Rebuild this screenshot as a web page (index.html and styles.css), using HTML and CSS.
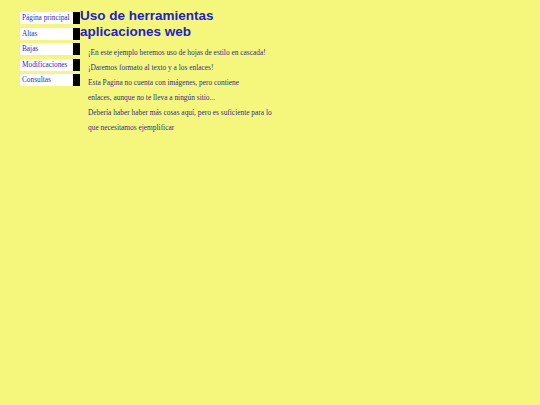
FILE: index.html
```html
<!DOCTYPE html>
<html lang="es">
<head>
<meta charset="utf-8">
<title>Uso de herramientas aplicaciones web</title>
<link rel="stylesheet" href="styles.css">
</head>
<body>
<div class="page">
  <ul class="menu">
    <li><a href="#">Página principal</a></li>
    <li><a href="#">Altas</a></li>
    <li><a href="#">Bajas</a></li>
    <li><a href="#">Modificaciones</a></li>
    <li><a href="#">Consultas</a></li>
  </ul>
  <div class="content">
    <h1 class="title">Uso de herramientas<br>aplicaciones web</h1>
    <div class="text">
      <p>¡En este ejemplo beremos uso de hojas de estilo en cascada!</p>
      <p>¡Daremos formato al texto y a los enlaces!</p>
      <p>Esta Pagina no cuenta con imágenes, pero contiene<br>enlaces, aunque no te lleva a ningún sitio...</p>
      <p>Debería haber haber más cosas aquí, pero es suficiente para lo<br>que necesitamos ejemplificar</p>
    </div>
  </div>
</div>
</body>
</html>
```
FILE: styles.css
```css
html, body {
  margin: 0;
  padding: 0;
  background: #f5f77d;
}
.page {
  display: flex;
  align-items: flex-start;
  padding: 12px 0 0 20px;
}
.menu {
  list-style: none;
  margin: 0;
  padding: 0;
  width: 60px;
}
.menu li {
  margin: 0 0 3.5px 0;
}
.menu a {
  display: block;
  height: 12px;
  line-height: 12px;
  padding-left: 2px;
  background: #ffffff;
  border-right: 7px solid #000000;
  color: #2a2ad0;
  text-decoration: none;
  font-family: "Liberation Serif", serif;
  font-size: 7.3px;
  white-space: nowrap;
  overflow: hidden;
}
.content {
  margin-top: -4px;
}
.title {
  margin: 0;
  font-family: "Liberation Sans", Arial, sans-serif;
  font-weight: bold;
  font-size: 13.5px;
  line-height: 15.5px;
  color: #2222cc;
}
.text {
  padding: 6px 0 0 8px;
}
.text p {
  margin: 0;
  font-family: "Liberation Serif", serif;
  font-size: 7.4px;
  line-height: 15px;
  color: #2e2e96;
}
```
